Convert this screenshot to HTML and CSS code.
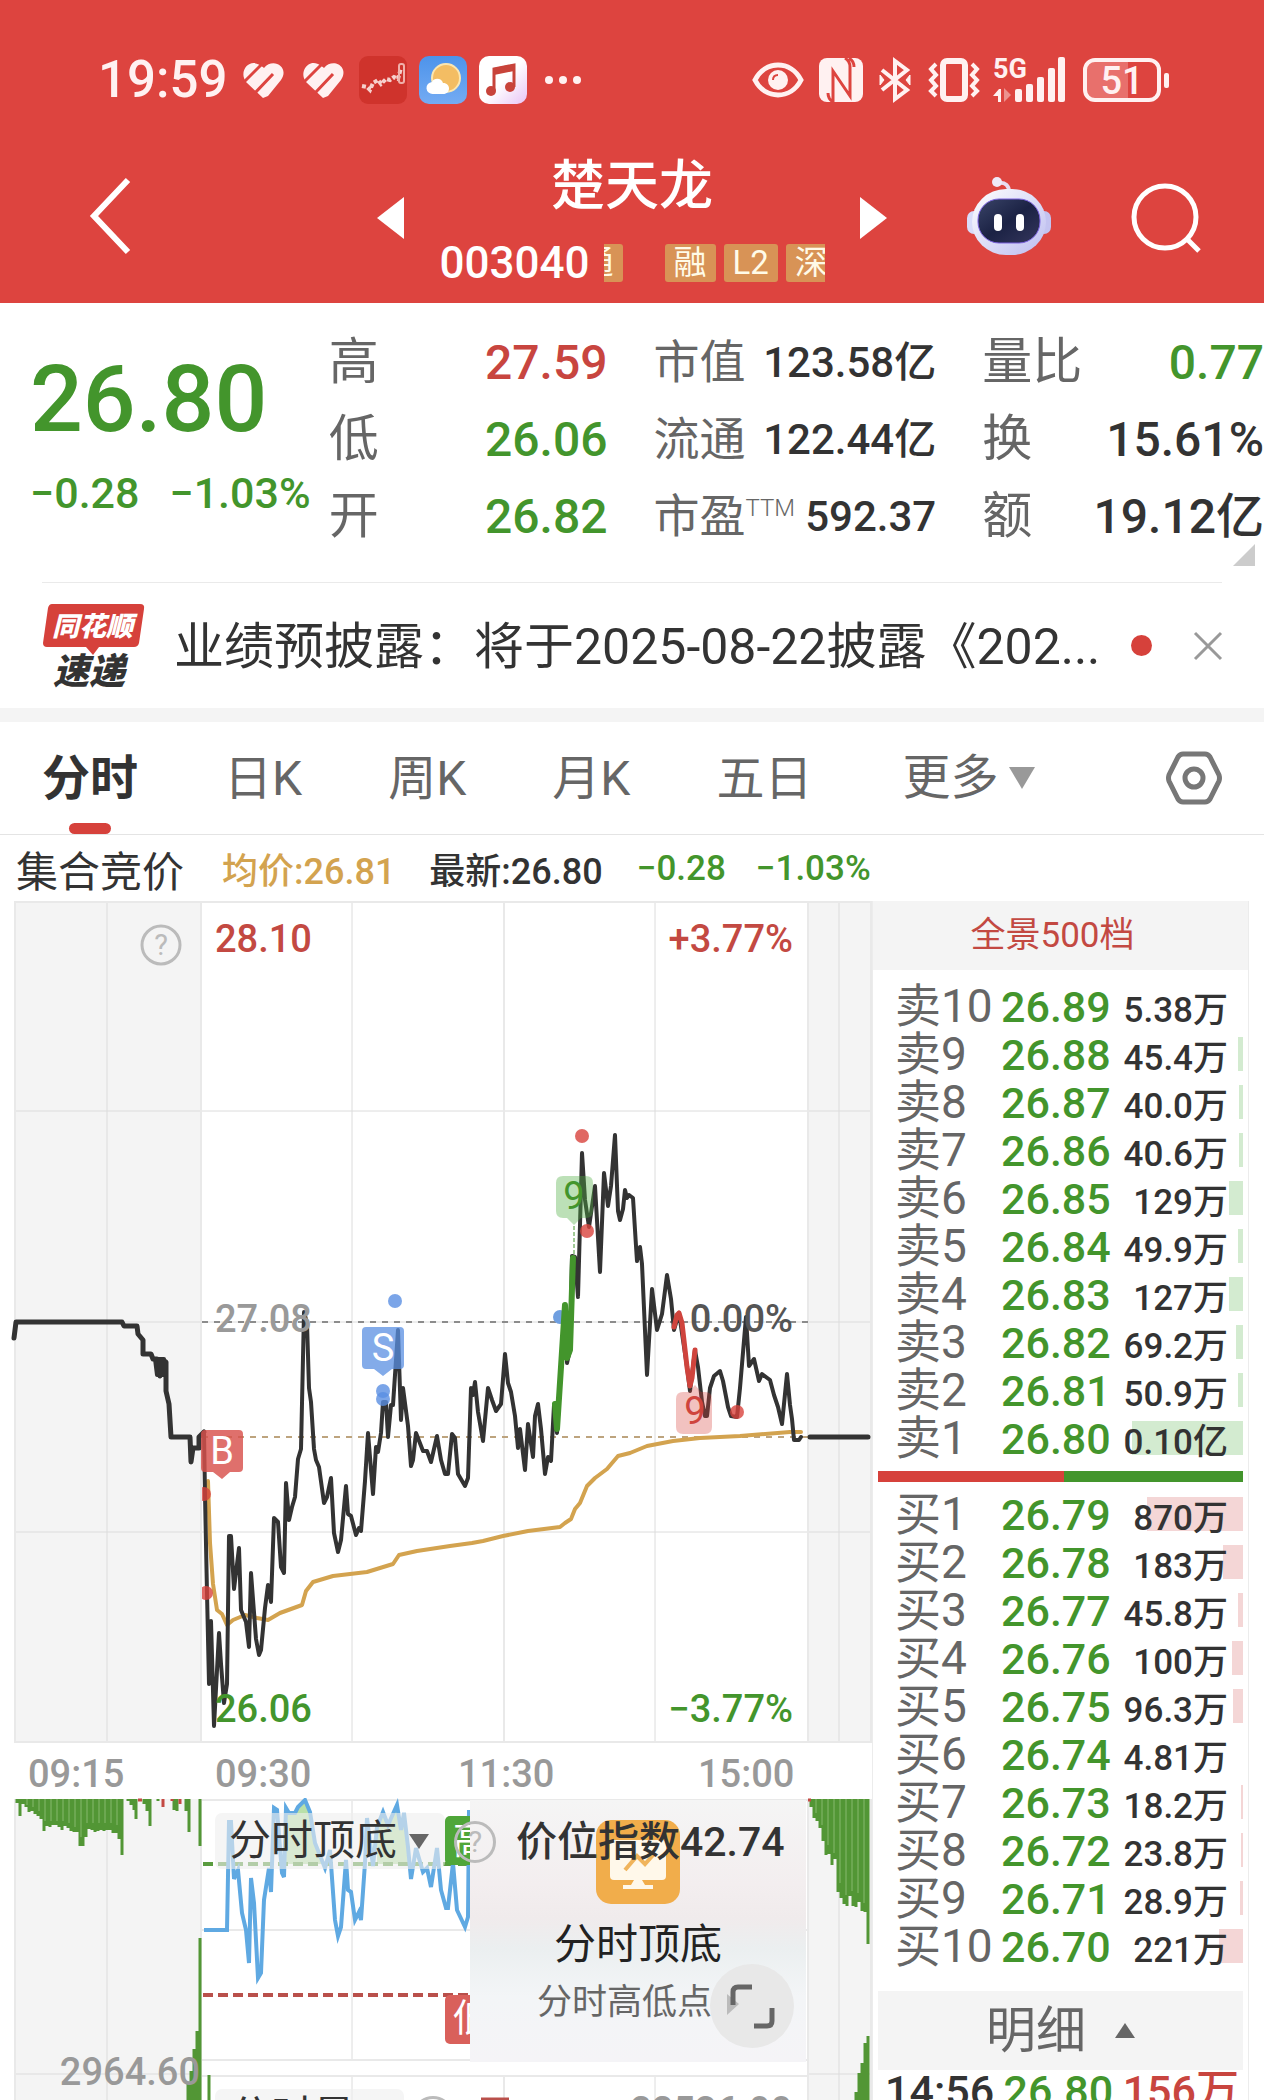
FILE: index.html
```html
<!DOCTYPE html>
<html lang="zh-CN">
<head>
<meta charset="utf-8">
<meta name="viewport" content="width=device-width, initial-scale=1">
<title>楚天龙 003040</title>
<link rel="stylesheet" href="styles.css">
</head>
<body>
<div class="app">
  <header class="top">
    <div class="status">
      <div class="status-left">
        <span class="clock">19:59</span>
        <svg class="heart" width="42" height="36" viewBox="0 0 42 36"><path d="M21 36 4 20C-4 9 8-5 19 4q2 1 3 2C31-5 48 5 39 18L26 34z" fill="#fff1f1"/><path d="M0 22 21 1M13 31 31 12" stroke="#dd443f" stroke-width="3"/></svg>
        <svg class="heart" width="42" height="36" viewBox="0 0 42 36"><path d="M21 36 4 20C-4 9 8-5 19 4q2 1 3 2C31-5 48 5 39 18L26 34z" fill="#fff1f1"/><path d="M0 22 21 1M13 31 31 12" stroke="#dd443f" stroke-width="3"/></svg>
        <svg width="48" height="48" viewBox="0 0 48 48"><rect width="48" height="48" rx="9" fill="#cf332c"/><path d="M3 30l5 1 3 3 3-7 5-3 3 4 5-5 4 1 4-3 4 2 3-11" fill="none" stroke="#f6d0cc" stroke-width="4" stroke-dasharray="4 2"/><rect x="40" y="8" width="5" height="19" rx="2" fill="none" stroke="#f0b0aa" stroke-width="2"/></svg>
        <svg width="48" height="48" viewBox="0 0 48 48"><defs><linearGradient id="sky" x1="0" y1="0" x2="0" y2="1"><stop offset="0" stop-color="#4d93ea"/><stop offset="1" stop-color="#74abf3"/></linearGradient></defs><rect width="48" height="48" rx="10" fill="url(#sky)"/><circle cx="27" cy="22" r="14" fill="#f3bd63" stroke="#fbe6b0" stroke-width="2"/><path d="M14 38a6 6 0 0 1-1-12c2-5 10-4 11 1 8 0 8 11 0 11z" fill="#fff"/></svg>
        <svg width="48" height="48" viewBox="0 0 48 48"><defs><linearGradient id="note" x1="0" y1="0" x2="1" y2="1"><stop offset=".5" stop-color="#fff"/><stop offset="1" stop-color="#e8c4f5"/></linearGradient></defs><rect width="48" height="48" rx="10" fill="url(#note)"/><path d="M15 35V13l20-4v22" fill="none" stroke="#c8433a" stroke-width="3"/><path d="M15 12l20-4v7l-20 4z" fill="#c8433a"/><circle cx="12" cy="35" r="5" fill="#c8433a"/><circle cx="31" cy="31" r="5" fill="#c8433a"/></svg>
        <svg class="dots" width="36" height="8" viewBox="0 0 36 8" fill="#fff1f1"><circle cx="4" cy="4" r="4"/><circle cx="18" cy="4" r="4"/><circle cx="32" cy="4" r="4"/></svg>
      </div>
      <div class="status-right">
        <svg width="52" height="36" viewBox="0 0 52 36"><path d="M3 18C13-2 39-2 49 18 39 38 13 38 3 18z" fill="none" stroke="#fff1f1" stroke-width="5"/><circle cx="26" cy="18" r="10" fill="#fff1f1"/><path d="M21 18c0-4 2-5 5-5" fill="none" stroke="#dd443f" stroke-width="2"/></svg>
        <svg width="44" height="44" viewBox="0 0 44 44"><rect width="44" height="44" rx="8" fill="#fff1f1"/><path d="M14 44q-5-3-5-9M14 44V13l17 25V9q0-6-5-9M30 0q5 3 5 9M14 13v25" fill="none" stroke="#dd443f" stroke-width="3"/></svg>
        <svg width="34" height="44" viewBox="0 0 34 44" fill="none" stroke="#fff1f1" stroke-width="4"><path d="M4 12l25 20-12 9V3l12 9L4 32"/><path d="M2 17v10l4-5zM32 17v10l-4-5z" fill="#fff1f1" stroke-width="1"/></svg>
        <svg width="54" height="44" viewBox="0 0 54 44" fill="none" stroke="#fff1f1"><rect x="16" y="3" width="22" height="38" rx="4" stroke-width="6"/><path d="M9 6 4 11l5 6-5 5 5 6-5 5 5 5M45 6l5 5-5 6 5 5-5 6 5 5-5 5" stroke-width="4"/></svg>
        <svg class="signal" width="74" height="46" viewBox="0 0 74 46" fill="#fff1f1"><text class="net" x="0" y="21">5G</text><path d="M0 39l6-7h2v13H5v-6z"/><path d="M11 31l7 7-7 7z" opacity=".45"/><rect x="22" y="32" width="7" height="13" rx="2"/><rect x="33" y="27" width="7" height="18" rx="2"/><rect x="44" y="20" width="7" height="25" rx="2"/><rect x="55" y="11" width="7" height="34" rx="2"/><rect x="65" y="0" width="7" height="45" rx="2"/></svg>
        <span class="battery">51</span>
      </div>
    </div>
    <nav class="nav">
      <div class="nav-left">
        <button class="plain" aria-label="返回"><svg width="44" height="80" viewBox="0 0 44 80"><path d="M40 4 6 40l34 36" fill="none" stroke="#fff" stroke-width="6"/></svg></button>
      </div>
      <div class="stock">
        <button class="plain" aria-label="上一只"><svg width="27" height="42" viewBox="0 0 27 42"><path d="M27 0v42L0 21z" fill="#fff"/></svg></button>
        <div class="stock-name">
          <h1>楚天龙</h1>
          <div class="code-row">
            <span class="code">003040</span>
            <div class="tags"><span class="tag tag-first">通</span><span class="tag">融</span><span class="tag">L2</span><span class="tag">深</span></div>
          </div>
        </div>
        <button class="plain" aria-label="下一只"><svg width="27" height="42" viewBox="0 0 27 42"><path d="M0 0v42l27-21z" fill="#fff"/></svg></button>
      </div>
      <div class="nav-right">
        <button class="plain robot" aria-label="智能助手"><svg width="84" height="78" viewBox="0 0 84 78">
          <defs><linearGradient id="shell" x1="0" y1="0" x2="1" y2="1"><stop offset="0" stop-color="#fff"/><stop offset="1" stop-color="#bcbdf0"/></linearGradient><linearGradient id="visor" x1="0" y1="0" x2="1" y2="1"><stop offset="0" stop-color="#3a4468"/><stop offset=".5" stop-color="#1b2244"/><stop offset="1" stop-color="#34365c"/></linearGradient></defs>
          <path d="M31 6c8-1 11 3 11 9" fill="none" stroke="#e8dcf0" stroke-width="4"/><circle cx="30" cy="5" r="5" fill="#efe9f8"/>
          <rect x="0" y="34" width="14" height="23" rx="7" fill="#d9dcfa"/><rect x="70" y="34" width="14" height="23" rx="7" fill="#c3c3f0"/>
          <rect x="5" y="12" width="74" height="66" rx="34" fill="url(#shell)"/>
          <rect x="11" y="22" width="62" height="44" rx="21" fill="url(#visor)" stroke="#7c63e0" stroke-width="1"/>
          <rect x="27" y="37" width="8" height="17" rx="4" fill="#fff"/><rect x="49" y="37" width="8" height="17" rx="4" fill="#fff"/></svg></button>
        <button class="plain" aria-label="搜索"><svg width="71" height="70" viewBox="0 0 71 70" fill="none" stroke="#fff"><circle cx="34" cy="34" r="31" stroke-width="5"/><path d="M56 56l12 12" stroke-width="5"/></svg></button>
      </div>
    </nav>
  </header>

  <section class="quote">
    <div class="last">
      <strong class="last-price">26.80</strong>
      <div class="last-change"><span>−0.28</span><span>−1.03%</span></div>
    </div>
    <dl class="stats">
      <div><dt>高</dt><dd class="up">27.59</dd></div>
      <div><dt>低</dt><dd class="down">26.06</dd></div>
      <div><dt>开</dt><dd class="down">26.82</dd></div>
    </dl>
    <dl class="stats stats-mid">
      <div><dt>市值</dt><dd>123.58亿</dd></div>
      <div><dt>流通</dt><dd>122.44亿</dd></div>
      <div><dt>市盈<sup>TTM</sup></dt><dd>592.37</dd></div>
    </dl>
    <dl class="stats">
      <div><dt>量比</dt><dd class="down">0.77</dd></div>
      <div><dt>换</dt><dd>15.61%</dd></div>
      <div><dt>额</dt><dd>19.12亿</dd></div>
    </dl>
    <svg class="corner" width="22" height="22" viewBox="0 0 22 22"><path d="M22 0v22H0z" fill="#ccc"/></svg>
  </section>

  <section class="news">
    <svg class="news-logo" width="104" height="86" viewBox="0 0 104 86"><path d="M10 1h88q5 0 4 5l-5 34q-1 4-5 4H57l-6 8-7-8H5q-4 0-4-4L6 5q1-4 4-4z" fill="#d6413b"/><text class="logo-top" x="10" y="33">同花顺</text><text class="logo-bottom" x="11" y="81">速递</text></svg>
    <a class="news-text" href="#news">业绩预披露：将于2025-08-22披露《202...</a>
    <span class="dot"></span>
    <button class="plain" aria-label="关闭"><svg width="28" height="28" viewBox="0 0 28 28"><path d="M1 1l26 26M27 1 1 27" stroke="#999" stroke-width="3"/></svg></button>
  </section>

  <nav class="tabs">
    <button class="tab active">分时</button>
    <button class="tab">日K</button>
    <button class="tab">周K</button>
    <button class="tab">月K</button>
    <button class="tab">五日</button>
    <button class="tab more">更多<svg width="26" height="22" viewBox="0 0 26 22"><path d="M0 0h26L13 22z" fill="#999"/></svg></button>
    <button class="plain gear" aria-label="设置"><svg width="56" height="54" viewBox="0 0 56 54" fill="none" stroke="#777" stroke-width="5"><path d="M17 3h22q3 0 5 3l9 18q1 3 0 6l-9 18q-2 3-5 3H17q-3 0-5-3L3 30q-1-3 0-6l9-18q2-3 5-3z"/><circle cx="28" cy="27" r="9"/></svg></button>
  </nav>

  <div class="summary">
    <span class="auction">集合竞价</span>
    <span class="avg">均价:26.81</span>
    <span>最新:26.80</span>
    <span class="change down"><span>−0.28</span><span>−1.03%</span></span>
  </div>

  <main class="body">
    <div class="chart">
      <svg class="plot" viewBox="0 901 872 1199">
        <defs>
          <clipPath id="session"><rect x="202" y="901" width="606" height="842"/></clipPath>
          <clipPath id="index"><rect x="202" y="1798" width="268" height="300"/></clipPath>
          <clipPath id="high"><rect x="202" y="1798" width="268" height="66"/></clipPath>
        </defs>
        <g fill="#f4f4f4">
          <path d="M14 901h188v841H14zM808 901h63v841h-63zM14 1799h188v301H14zM808 1799h63v301h-63z"/>
        </g>
        <g stroke="#dcdcdc" fill="none">
          <path d="M107 901v841M352 901v841M655 901v841M839 901v841M14 1111h857M14 1322h857M14 1532h857M107 1799v301M352 1799v261M655 1799v261M839 1799v301M352 2075v25M655 2075v25M14 2074h188M808 2074h63"/>
          <path d="M15 901v841M201 901v841M504 901v841M808 901v841M871 901v841M14 902h858M14 1742h858M15 1799v301M201 1799v301M504 1799v261M504 2075v25M808 1799v301M871 1799v301M202 1800h606M202 1930h606M202 2060h606M202 2076h606" stroke="#e9e9e9" stroke-width="2"/>
        </g>

        <path d="M202 1322h606" stroke="#8c8c8c" stroke-width="2" stroke-dasharray="6 6"/>
        <path d="M202 1437h606" stroke="#bda47e" stroke-width="2" stroke-dasharray="6 6"/>

        <g fill="none" stroke-linejoin="round" stroke-linecap="round">
          <path d="M208 1481 210 1543 213 1584 217 1610 222 1614 227 1625 233 1620 245 1615 257 1618 268 1620 280 1613 302 1605 306 1591 313 1582 333 1576 367 1572 393 1564 399 1555 417 1551 450 1546 472 1543 483 1541 503 1536 528 1531 560 1527 565 1523 571 1519 575 1509 580 1503 587 1486 595 1478 607 1469 618 1456 630 1453 647 1446 673 1441 700 1438 740 1436 790 1432 801 1432" stroke="#d3a34f" stroke-width="4"/>
          <path d="M14 1338 16 1322H122L124 1326H137L138 1334 143 1340V1354H151L153 1359H157L160 1376 163 1360 166 1362V1391L169 1404 171 1437H190L191 1462 193 1448H199V1437L204 1432" stroke="#333" stroke-width="5"/>
          <path d="M155 1359h9v16h-7z" fill="#333" stroke="#333" stroke-width="4"/>
          <path d="M204 1432 205 1495 207 1593 209 1684 211 1621 214 1726 219 1633 221 1664 224 1703 227 1684 229 1536 231 1536 234 1589 239 1548 241 1610 246 1622 249 1647 251 1573 256 1639 259 1655 261 1650 265 1608 268 1585 271 1602 274 1518 278 1522 281 1567 284 1573 286 1483 289 1520 292 1507 295 1497 298 1459 301 1449 304 1312 307 1323 309 1388 311 1402 314 1449 316 1460 319 1467 324 1503 327 1497 331 1478 334 1533 338 1552 341 1540 346 1486 348 1514 351 1516 356 1535 359 1528 361 1531 365 1481 368 1433 373 1494 376 1447 378 1452 381 1433 383 1402 386 1402 388 1437 391 1405 393 1405 398 1330 401 1420 403 1388 408 1426 411 1466 413 1460 416 1433 423 1451 427 1451 431 1462 437 1436 441 1460 445 1474 448 1474 452 1434 455 1438 458 1474 465 1486 468 1478 471 1388 473 1395 475 1382 478 1412 483 1441 488 1388 492 1400 496 1411 501 1404 505 1354 508 1383 511 1392 515 1416 518 1448 520 1429 525 1470 528 1424 533 1457 535 1416 538 1404 541 1429 545 1474 548 1457 551 1461 554 1405 557 1433 565 1305 567 1363 570 1350 572 1256 575 1257 578 1297 582 1153 585 1200 589 1227 595 1186 600 1272 604 1173 608 1206 611 1186 615 1135 618 1211 620 1220 623 1209 625 1190 627 1198 629 1195 633 1198 636 1246 637 1261 640 1247 642 1264 647 1375 652 1289 657 1330 662 1314 667 1275 671 1299 674 1330 679 1313 687 1367 690 1391 695 1350 698 1367 702 1402 705 1416 707 1416 710 1388 714 1376 720 1371 723 1381 728 1407 731 1416 737 1417 740 1388 746 1317 749 1366 754 1359 759 1381 762 1374 770 1380 774 1395 778 1407 782 1424 787 1374 790 1405 792 1419 794 1440 799 1440 801 1437" stroke="#333" stroke-width="4"/>
          <path d="M810 1437h58" stroke="#333" stroke-width="5"/>
          <circle cx="560" cy="1317" r="7" fill="#6f9fe0"/>
          <path d="M555 1404 557 1429 565 1305 567 1358 570 1350 573 1258" stroke="#43952c" stroke-width="6"/>
          <path d="M674 1327 677 1315 679 1313 682 1323 687 1367 690 1386 692 1378 695 1350" stroke="#cf443d" stroke-width="5"/>
        </g>
        <path d="M574 1226v30" stroke="#43952c" stroke-dasharray="4 2"/>

        <g clip-path="url(#session)" fill="#d8423c" fill-opacity=".8">
          <circle cx="204" cy="1494" r="7"/><circle cx="206" cy="1593" r="7"/><circle cx="582" cy="1136" r="7"/><circle cx="587" cy="1231" r="7"/><circle cx="737" cy="1412" r="7"/>
        </g>
        <g fill="#5a8fe2" fill-opacity=".8"><circle cx="395" cy="1301" r="7"/><circle cx="383" cy="1391" r="7"/><circle cx="383" cy="1399" r="7"/></g>

        <path d="M205 1430h34q4 0 4 4v34q0 4-4 4h-9l-8 7-9-7h-8q-4 0-4-4v-34q0-4 4-4z" fill="#d8514c" fill-opacity=".82"/>
        <path d="M366 1327h34q4 0 4 4v34q0 4-4 4h-8l-9 7-9-7h-8q-4 0-4-4v-34q0-4 4-4z" fill="#5a8fe2" fill-opacity=".75"/>
        <path d="M563 1176h23q7 0 7 7v28q0 7-7 7h-5l-7 7-7-7h-4q-7 0-7-7v-28q0-7 7-7z" fill="#4eae43" fill-opacity=".38"/>
        <path d="M683 1392h6l6-7 6 7h4q7 0 7 7v28q0 7-7 7h-22q-7 0-7-7v-28q0-7 7-7z" fill="#d8423c" fill-opacity=".32"/>
        <g class="mark" text-anchor="middle">
          <text x="222" y="1464" fill="#fff">B</text><text x="383" y="1361" fill="#fff">S</text>
          <text x="574" y="1209" fill="#43952c">9</text><text x="695" y="1424" fill="#cf443d">9</text>
        </g>

        <g class="scale">
          <text x="215" y="952" fill="#c34942">28.10</text><text x="215" y="1332" fill="#999">27.08</text><text x="215" y="1722" fill="#43952c">26.06</text>
          <g text-anchor="end"><text x="793" y="952" fill="#c34942">+3.77%</text><text x="793" y="1332" fill="#555">0.00%</text><text x="793" y="1722" fill="#43952c">−3.77%</text></g>
          <g fill="#999"><text x="28" y="1787">09:15</text><text x="215" y="1787">09:30</text><text x="458" y="1787">11:30</text><text x="698" y="1787">15:00</text></g>
        </g>
        <g fill="none" stroke="#bbb" stroke-width="3"><circle cx="161" cy="945" r="19"/></g>
        <text class="hint" x="161" y="955" text-anchor="middle">?</text>

        <g clip-path="url(#index)" fill="none">
          <path clip-path="url(#high)" d="M286 1864V1808L289 1813 295 1813 298 1807 305 1800 310 1812 315 1843 325 1864zM377 1864V1827L383 1812 388 1825 397 1805 401 1830 404 1813 410 1864z" fill="#b9e0a9"/>
          <path d="M203 1864h267" stroke="#5a9c3f" stroke-width="4" stroke-dasharray="10 5"/>
          <path d="M203 1995h267" stroke="#b9504b" stroke-width="4" stroke-dasharray="10 5"/>
          <path d="M204 1930 227 1930 229 1822 231 1822 234 1879 238 1870 242 1913 246 1930 249 1963 251 1878 254 1903 258 1978 261 1973 264 1900 269 1868 271 1892 274 1808 277 1810 282 1873 284 1877 286 1808 289 1813 295 1813 298 1807 305 1800 310 1812 315 1843 325 1868 330 1850 335 1920 338 1936 341 1927 346 1860 348 1890 351 1892 355 1920 359 1912 361 1920 365 1863 367 1818 373 1866 377 1827 383 1812 388 1825 397 1805 401 1830 404 1813 408 1847 411 1879 416 1848 423 1872 427 1868 431 1887 437 1848 441 1890 446 1908 448 1908 453 1863 457 1910 465 1927 468 1917 469 1810" stroke="#5fa9e2" stroke-width="4"/>
          <rect x="445" y="1816" width="40" height="49" rx="5" fill="#4fa639"/><rect x="445" y="1995" width="40" height="49" rx="5" fill="#d9605b"/>
          <text class="flag" x="453" y="1853">高</text><text class="flag" x="453" y="2031">低</text>
        </g>

        <g fill="none" stroke-width="3">
          <g stroke="#529635">
            <path d="M17 1799v4M20 1799v17M23 1799v5M26 1799v8M29 1799v13M32 1799v12M35 1799v15M38 1799v17M41 1799v20M44 1799v32M47 1799v27M50 1799v28M53 1799v26M56 1799v26M59 1799v28M62 1799v31M65 1799v27M68 1799v29M71 1799v32M74 1799v33M77 1799v33M80 1799v47M83 1799v47M86 1799v38M89 1799v30M92 1799v31M95 1799v33M98 1799v32M101 1799v31M104 1799v32M107 1799v31M110 1799v31M113 1799v34M116 1799v34M119 1799v40M122 1799v56M128 1799v2M131 1799v6M134 1799v11M136 1799v20M144 1799v5M147 1799v12M150 1799v27M158 1799v2M174 1799v11M177 1799v12M186 1799v12M189 1799v33M200 1799v47M188 2100v-18M191 2100v-29M194 2100v-51M197 2100v-69M200 2100v-162M209 2075v25"/>
            <path d="M811 1799v8M814 1799v19M817 1799v22M820 1799v29M823 1799v42M826 1799v56M829 1799v55M832 1799v66M835 1799v60M838 1799v93M841 1799v99M844 1799v105M847 1799v107M850 1799v97M853 1799v107M856 1799v108M859 1799v103M862 1799v112M865 1799v113M868 1799v145M856 2100v-8M859 2100v-27M862 2100v-37M865 2100v-57M868 2100v-64"/>
          </g>
          <path d="M138 1800h4M163 1799v8M172 1799v2M180 1799v5M808 1800h3" stroke="#c34942"/>
          <path d="M27 1799v6M33 1799v8M39 1799v12M45 1799v22M51 1799v22M57 1799v22M63 1799v22M69 1799v24M75 1799v28M81 1799v38M87 1799v24M93 1799v24M99 1799v24M105 1799v24M111 1799v24M117 1799v26M816 1799v14M822 1799v26M828 1799v46M834 1799v54M840 1799v84M846 1799v96M852 1799v92M858 1799v94M864 1799v104" stroke="#86b96f" stroke-width="1"/>
        </g>
        <g class="scale" fill="#999"><text x="200" y="2085" text-anchor="end">2964.60</text><text x="792" y="2124" text-anchor="end">22536.00</text></g>
        <path d="M481 2099h28" stroke="#b9504b" stroke-width="3"/>
      </svg>

      <div class="popup">
        <svg width="84" height="84" viewBox="0 0 84 84"><rect width="84" height="84" rx="15" fill="#f1ad4b"/><path d="M18 20h48q4 0 4 4v32q0 4-4 4H18q-4 0-4-4V24q0-4 4-4z" fill="#fff8ea"/><path d="M29 50 41 36l8 8 9-10" fill="none" stroke="#f0b45c" stroke-width="4"/><path d="M38 60h8l3 5h8v4H27v-4h8z" fill="#fff8ea"/></svg>
        <strong>分时顶底</strong>
        <small>分时高低点</small>
      </div>
      <button class="picker">分时顶底<svg width="20" height="15" viewBox="0 0 20 15"><path d="M0 0h20L10 15z" fill="#666"/></svg></button>
      <button class="help" aria-label="说明">?</button>
      <span class="index-value">价位指数42.74</span>
      <button class="expand" aria-label="全屏"><svg width="48" height="46" viewBox="0 0 48 46"><path d="M0 11l12 10L0 32z" fill="#bbb"/><path d="M6 22V9q0-5 5-5h14M45 25v13q0 5-5 5H27" fill="none" stroke="#666" stroke-width="5"/></svg></button>
      <button class="picker picker-second">分时量<svg width="20" height="15" viewBox="0 0 20 15"><path d="M0 0h20L10 15z" fill="#666"/></svg></button>
      <button class="help help-second" aria-label="说明">?</button>
    </div>

    <aside class="book">
      <button class="depth">全景500档</button>
      <table class="orders sell">
        <tr><th>卖10</th><td>26.89</td><td style="--w:0px">5.38万</td></tr>
        <tr><th>卖9</th><td>26.88</td><td style="--w:5px">45.4万</td></tr>
        <tr><th>卖8</th><td>26.87</td><td style="--w:4px">40.0万</td></tr>
        <tr><th>卖7</th><td>26.86</td><td style="--w:4px">40.6万</td></tr>
        <tr><th>卖6</th><td>26.85</td><td style="--w:14px">129万</td></tr>
        <tr><th>卖5</th><td>26.84</td><td style="--w:5px">49.9万</td></tr>
        <tr><th>卖4</th><td>26.83</td><td style="--w:14px">127万</td></tr>
        <tr><th>卖3</th><td>26.82</td><td style="--w:7px">69.2万</td></tr>
        <tr><th>卖2</th><td>26.81</td><td style="--w:5px">50.9万</td></tr>
        <tr><th>卖1</th><td>26.80</td><td style="--w:111px">0.10亿</td></tr>
      </table>
      <div class="ratio"><i></i></div>
      <table class="orders buy">
        <tr><th>买1</th><td>26.79</td><td style="--w:96px">870万</td></tr>
        <tr><th>买2</th><td>26.78</td><td style="--w:20px">183万</td></tr>
        <tr><th>买3</th><td>26.77</td><td style="--w:5px">45.8万</td></tr>
        <tr><th>买4</th><td>26.76</td><td style="--w:11px">100万</td></tr>
        <tr><th>买5</th><td>26.75</td><td style="--w:10px">96.3万</td></tr>
        <tr><th>买6</th><td>26.74</td><td style="--w:0px">4.81万</td></tr>
        <tr><th>买7</th><td>26.73</td><td style="--w:2px">18.2万</td></tr>
        <tr><th>买8</th><td>26.72</td><td style="--w:2px">23.8万</td></tr>
        <tr><th>买9</th><td>26.71</td><td style="--w:3px">28.9万</td></tr>
        <tr><th>买10</th><td>26.70</td><td style="--w:24px">221万</td></tr>
      </table>
      <button class="detail">明细<svg width="20" height="15" viewBox="0 0 20 15"><path d="M0 15h20L10 0z" fill="#666"/></svg></button>
      <div class="trade"><span>14:56</span><span class="down">26.80</span><span class="up">156万</span></div>
    </aside>
  </main>
</div>
</body>
</html>
```
FILE: styles.css
```css
* { box-sizing: border-box; }
body {
  margin: 0;
  background: #fff;
  color: #333;
  font-family: Roboto, "Noto Sans CJK SC", sans-serif;
}
h1, dl, dd { margin: 0; }
button { font: inherit; color: inherit; border: 0; padding: 0; background: none; cursor: pointer; }
svg { display: block; flex: none; overflow: visible; }
.app { height: 100vh; overflow: hidden; }
.up { color: #c8453f; }
.down { color: #43952c; }

.top { background: #dd443f; color: #fff; height: 303px; }
.status { display: flex; justify-content: space-between; align-items: center; height: 132px; padding: 28px 94px 0 98px; color: #fff1f1; }
.status-left { display: flex; align-items: center; gap: 12px; }
.clock { font-size: 51px; font-weight: 500; line-height: 56px; }
.heart { margin: 0 3px; }
.dots { margin-left: 6px; }
.status-right { display: flex; align-items: center; gap: 15px; }
.signal { margin-left: -3px; }
.net { font-size: 27px; font-weight: 700; }
.battery {
  position: relative;
  width: 78px; height: 44px; margin: 0 9px 0 1px;
  border: 4px solid #fff1f1; border-radius: 12px;
  background: linear-gradient(90deg, #e8706c 58%, transparent 58%);
  font-size: 38px; font-weight: 500; line-height: 38px; text-align: center;
}
.battery::after { content: ""; position: absolute; right: -12px; top: 11px; width: 5px; height: 15px; border-radius: 2px; background: #fff1f1; }

.nav { display: grid; grid-template-columns: 1fr 510px 1fr; align-items: center; height: 171px; }
.nav-left { padding-left: 88px; }
.nav-right { display: flex; align-items: center; justify-content: flex-end; gap: 80px; padding-right: 62px; }
.robot { margin-bottom: 4px; }
.stock { display: flex; align-items: center; justify-content: space-between; }
.stock-name { display: flex; flex-direction: column; align-items: center; gap: 27px; padding-top: 4px; }
h1 { font-size: 54px; font-weight: 500; line-height: 60px; }
.code-row { display: flex; align-items: center; gap: 14px; height: 38px; }
.code { font-size: 44px; font-weight: 500; line-height: 38px; }
.tags { display: flex; gap: 8px; width: 221px; overflow: hidden; }
.tag { flex: none; padding: 0 9px; border-radius: 3px; background: #d89356; color: #fffbe8; font-size: 33px; line-height: 38px; }
.tag-first { margin: 0 34px 0 -32px; }

.quote {
  position: relative;
  display: grid; grid-template-columns: minmax(0, 253fr) 279fr 283fr 282fr; column-gap: 46px;
  height: 279px; padding: 21px 0 0 30px;
}
.last { padding-top: 21px; white-space: nowrap; color: #43952c; }
.last-price { display: block; font-size: 93px; font-weight: 500; line-height: 110px; }
.last-change { display: flex; gap: 30px; font-size: 43px; font-weight: 500; line-height: 76px; }
.stats > div { display: flex; justify-content: space-between; line-height: 77px; white-space: nowrap; }
.stats dt { font-size: 50px; color: #666; }
.stats dd { font-size: 48px; font-weight: 500; }
.stats-mid dt { font-size: 46px; }
.stats-mid dd { font-size: 42px; }
.stats sup { font-size: 24px; font-weight: 300; line-height: 1; vertical-align: 16px; }
.corner { position: absolute; right: 9px; bottom: 16px; }

.news { display: flex; align-items: center; height: 126px; margin: 0 42px; border-top: 1px solid #eaeaea; }
.logo-top { font-size: 27px; font-weight: 900; font-style: italic; fill: #fff; }
.logo-bottom { font-size: 36px; font-weight: 900; font-style: italic; fill: #333; }
.news-text { flex: 1; margin-left: 28px; padding-top: 3px; overflow: hidden; white-space: nowrap; color: #333; font-size: 50px; line-height: 70px; text-decoration: none; }
.dot { width: 21px; height: 21px; margin: 0 42px 0 10px; border-radius: 50%; background: #d6413b; }

.tabs { display: flex; align-items: center; gap: 86px; height: 127px; padding: 0 42px; border-top: 14px solid #f4f4f4; border-bottom: 1px solid #e4e4e4; }
.tab { position: relative; height: 112px; color: #666; font-size: 48px; line-height: 114px; white-space: nowrap; }
.active { color: #333; font-weight: 700; }
.active::after { content: ""; position: absolute; left: 27px; bottom: 0; width: 42px; height: 11px; border-radius: 6px; background: #d6413b; }
.more { display: flex; align-items: center; gap: 11px; margin-left: 4px; }
.gear { margin-left: auto; }

.summary { display: flex; align-items: center; gap: 34px; height: 66px; padding: 0 0 0 16px; font-size: 36px; font-weight: 500; white-space: nowrap; }
.auction { font-size: 42px; font-weight: 400; margin-right: 4px; }
.avg { color: #d3a34f; }
.change { display: flex; gap: 30px; font-size: 35px; }

.body { display: grid; grid-template-columns: 872fr 392fr; align-items: start; }
.chart { position: relative; }
.plot { width: 100%; height: auto; overflow: hidden; }
.scale { font-size: 38px; font-weight: 500; }
.mark { font-size: 38px; }
.hint { font-size: 29px; fill: #bbb; }
.flag { font-size: 38px; fill: #fff; }
.picker {
  position: absolute; left: 215px; top: 912px;
  display: flex; align-items: center; gap: 12px;
  width: 230px; height: 56px; padding-left: 14px;
  border-radius: 7px; background: rgba(238, 238, 238, .6);
  font-size: 42px; line-height: 58px;
}
.picker-second { top: 1188px; width: 189px; line-height: 62px; }
.help { position: absolute; left: 454px; top: 920px; width: 42px; height: 42px; border: 3px solid #bbb; border-radius: 50%; color: #bbb; font-size: 30px; line-height: 36px; text-align: center; }
.help-second { left: 412px; top: 1195px; }
.index-value { position: absolute; left: 516px; top: 912px; font-size: 41px; font-weight: 500; line-height: 58px; }
.popup {
  position: absolute; left: 470px; top: 899px;
  display: flex; flex-direction: column; align-items: center;
  width: 336px; height: 262px; padding-top: 20px;
  background: linear-gradient(#f5f5f5, #f3eeef 32%, #f0ebec 45%, #ebeff0 57%, #f3f5f7 75%, #f5f4f7);
}
.popup strong { margin-top: 12px; font-size: 42px; font-weight: 400; line-height: 58px; color: #222; }
.popup small { align-self: flex-start; margin: 5px 0 0 67px; font-size: 35px; line-height: 48px; color: #666; }
.expand { position: absolute; left: 710px; top: 1063px; display: flex; align-items: center; padding-left: 17px; width: 84px; height: 84px; border-radius: 50%; background: #e8e8e8; }

.book { margin-right: 15px; border-right: 1px solid #ececec; border-left: 1px solid #ececec; padding-right: 5px; }
.depth { display: block; width: calc(100% + 5px); height: 69px; padding-right: 16px; background: #f4f4f4; color: #c34942; font-size: 35px; line-height: 70px; text-align: center; }
.orders { width: 100%; border-collapse: collapse; table-layout: fixed; line-height: 36px; white-space: nowrap; }
.orders tr { height: 48px; }
.orders th, .orders td { padding: 0; vertical-align: baseline; text-align: left; }
.orders th { width: 128px; padding-left: 22px; color: #666; font-size: 46px; font-weight: 400; }
.orders td { width: 112px; color: #43952c; font-size: 43px; font-weight: 500; }
.orders td:last-child { width: auto; padding-right: 15px; color: #333; font-size: 35px; text-align: right; background: linear-gradient(var(--bar), var(--bar)) right top 1px / var(--w) 34px no-repeat; }
.sell { --bar: #d3ebd0; margin-top: 18px; }
.buy { --bar: #f4d6d6; }
.ratio { height: 11px; margin: 3px 0 14px 5px; background: #43952c; }
.ratio i { display: block; width: 51%; height: 11px; background: #d6413b; }
.detail { display: flex; align-items: center; justify-content: center; gap: 29px; width: calc(100% - 5px); height: 79px; margin: 15px 0 0 5px; background: #f4f4f4; color: #666; font-size: 50px; line-height: 82px; }
.trade { display: flex; justify-content: space-between; height: 60px; padding: 0 4px 0 12px; font-size: 43px; font-weight: 500; line-height: 43px; }
```
